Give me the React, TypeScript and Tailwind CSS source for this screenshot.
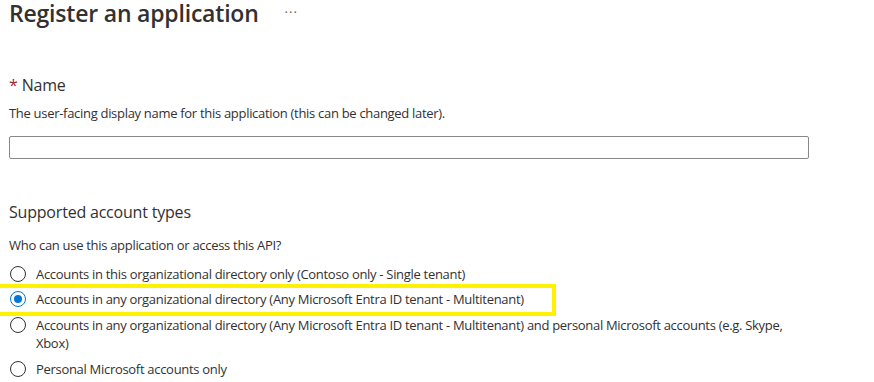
import { useState } from 'react';

type AccountOption = {
  id: string;
  label: string;
};

const accountOptions: AccountOption[] = [
  { id: 'single', label: 'Accounts in this organizational directory only (Contoso only - Single tenant)' },
  {
    id: 'multi',
    label: 'Accounts in any organizational directory (Any Microsoft Entra ID tenant - Multitenant)',
  },
  {
    id: 'multi-personal',
    label:
      'Accounts in any organizational directory (Any Microsoft Entra ID tenant - Multitenant) and personal Microsoft accounts (e.g. Skype, Xbox)',
  },
  { id: 'personal', label: 'Personal Microsoft accounts only' },
];

function Radio({ checked }: { checked: boolean }) {
  return (
    <span
      className={
        checked
          ? 'ml-[1px] mt-[1px] flex h-[16px] w-[16px] shrink-0 items-center justify-center rounded-full border border-[#0078d4]'
          : 'ml-[1px] mt-[1px] flex h-[16px] w-[16px] shrink-0 items-center justify-center rounded-full border border-[#323130]'
      }
    >
      {checked && <span className="h-[8px] w-[8px] rounded-full bg-[#0078d4]" />}
    </span>
  );
}

export default function App() {
  const [selected, setSelected] = useState('multi');
  const [name, setName] = useState('');

  return (
    <div className="h-[382px] w-[874px] overflow-hidden bg-white pl-[9px] font-['Segoe_UI','Open_Sans',sans-serif] text-[#323130]">
      <div className="flex items-center gap-[26px]">
        <h1 className="text-[23px] font-semibold leading-[26px] tracking-[-0.2px]">Register an application</h1>
        <span className="pb-[2px] text-[13px] leading-none tracking-[1px] text-[#605e5c]">···</span>
      </div>

      <div className="w-[800px] pt-[48px]">
        <label htmlFor="app-name" className="block text-[16px] leading-[22px] tracking-[-0.2px]">
          <span className="mr-[4px] text-[#a4262c]">*</span>Name
        </label>
        <p className="mt-[8px] text-[13px] leading-[18px] tracking-[-0.3px]">
          The user-facing display name for this application (this can be changed later).
        </p>
        <input
          id="app-name"
          value={name}
          onChange={(e) => setName(e.target.value)}
          className="mt-[14px] block h-[23px] w-[800px] rounded-[2px] border border-[#8a8886] px-2 text-[13px] outline-none"
        />

        <h2 className="mt-[42px] text-[16px] leading-[22px] tracking-[-0.2px]">Supported account types</h2>
        <p className="mt-[13px] text-[13px] leading-[18px] tracking-[-0.3px]">
          Who can use this application or access this API?
        </p>

        <div className="mt-[11px] flex flex-col gap-[8px]">
          {accountOptions.map((opt, i) => (
            <button
              key={opt.id}
              type="button"
              onClick={() => setSelected(opt.id)}
              className={
                i === 0
                  ? 'relative -mb-[1px] flex items-start gap-[10px] text-left'
                  : 'relative flex items-start gap-[10px] text-left'
              }
            >
              {opt.id === 'multi' && (
                <span className="pointer-events-none absolute left-[-13px] top-[-6px] h-[32px] w-[560px] border-[4px] border-[#fff200]" />
              )}
              <Radio checked={selected === opt.id} />
              <span className="text-[13px] leading-[18px] tracking-[-0.3px]">{opt.label}</span>
            </button>
          ))}
        </div>
      </div>
    </div>
  );
}
